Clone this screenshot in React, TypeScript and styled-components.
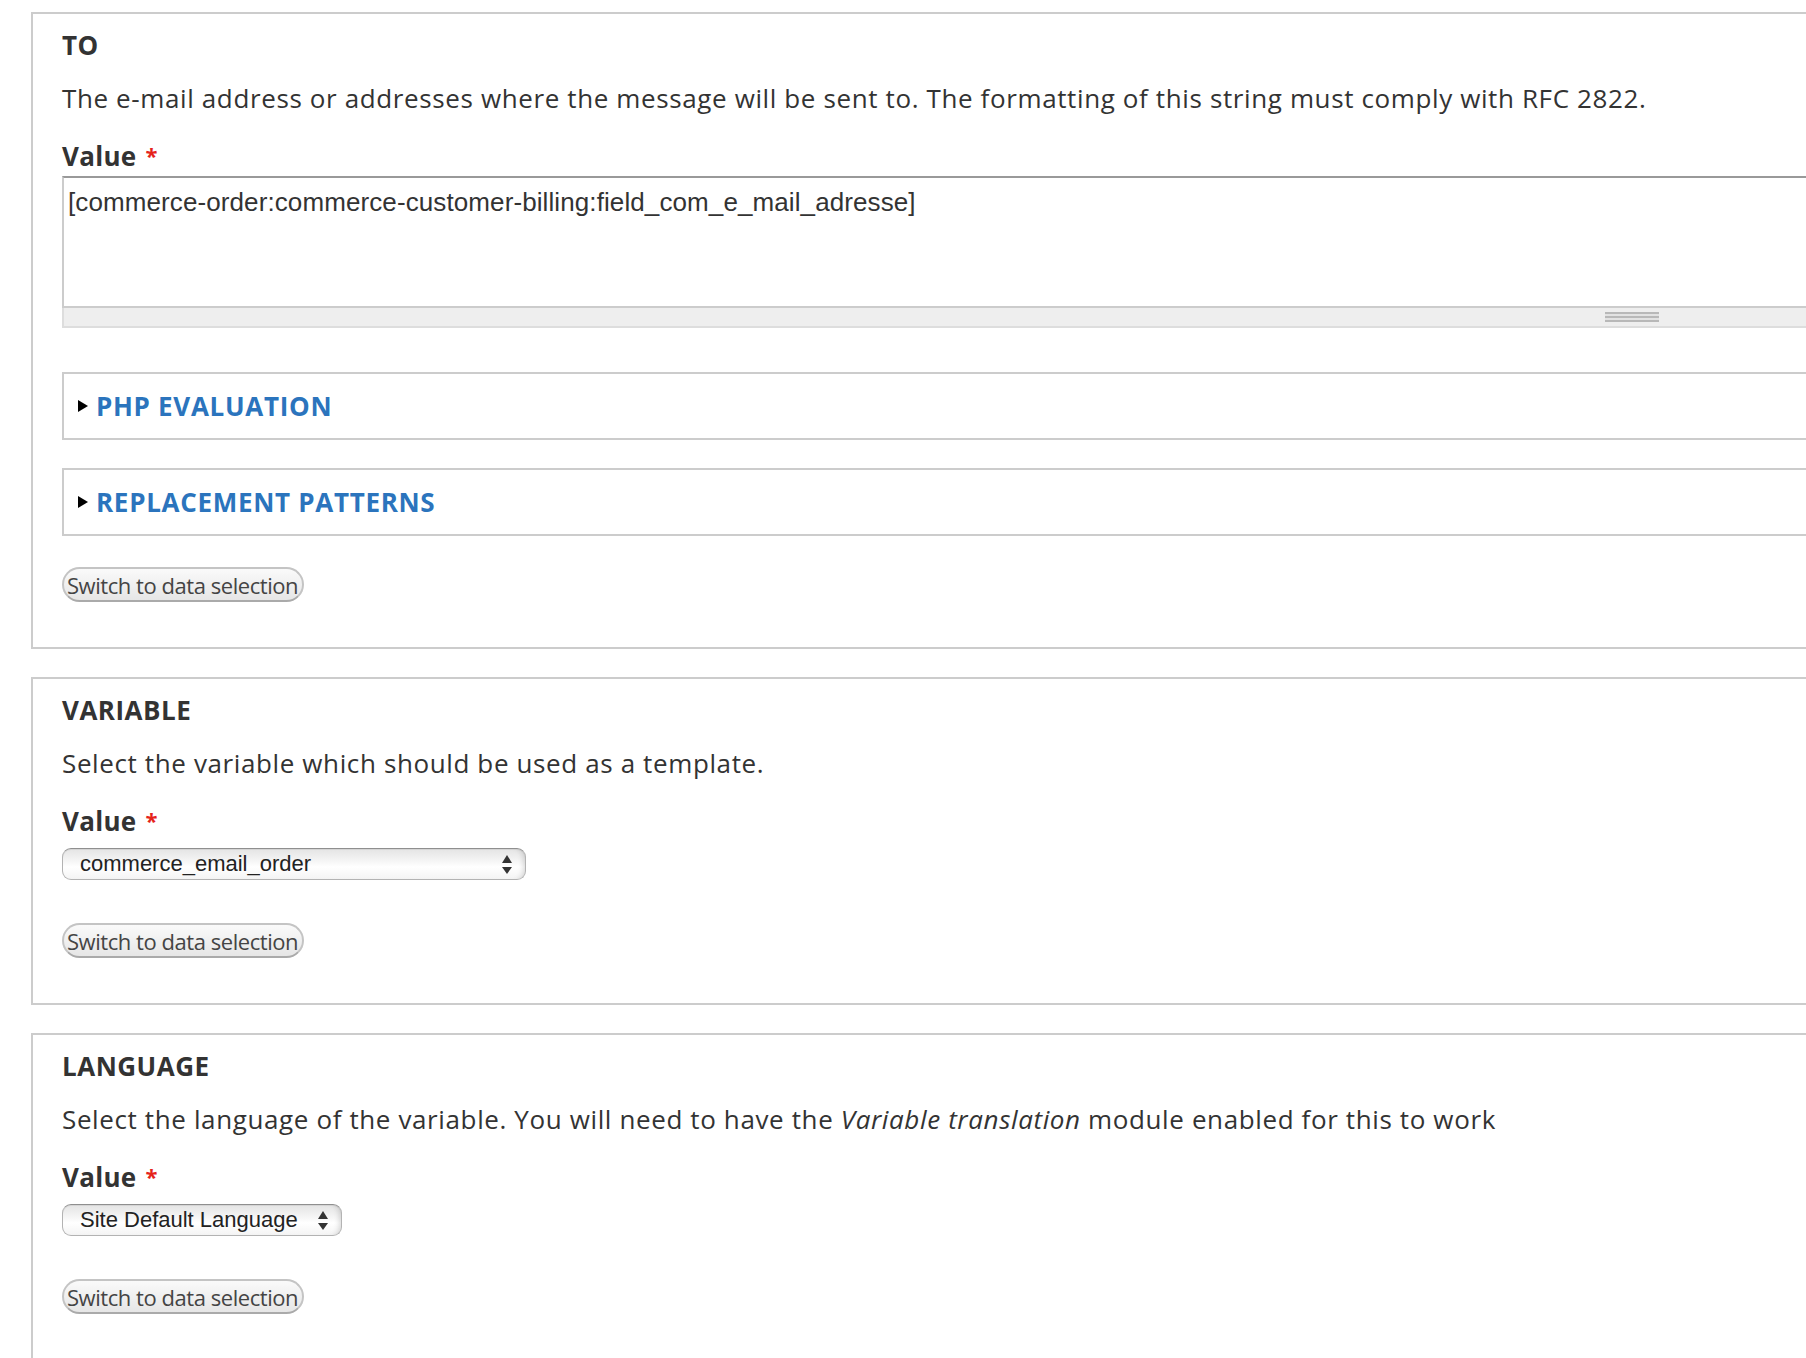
import styled, { createGlobalStyle } from 'styled-components'

const GlobalStyle = createGlobalStyle`
	html, body {
		margin: 0;
		padding: 0;
		background: #fff;
		overflow: hidden;
	}
	body {
		font-family: 'Open Sans', 'DejaVu Sans', sans-serif;
		font-size: 26px;
		color: #333;
	}
`

const Page = styled.main`
	padding: 12px 0 0 31px;
`

const Fieldset = styled.section`
	box-sizing: border-box;
	width: 3202px;
	margin-bottom: 28px;
	padding: 16px 29px 45px;
	border: 2px solid #ccc;
`

const Legend = styled.h2`
	margin: 0;
	font-size: 26px;
	line-height: 30px;
	font-weight: 700;
	letter-spacing: 0.5px;
	text-transform: uppercase;
	color: #333;
`

const Description = styled.p`
	margin: 23px 0 0;
	font-size: 26px;
	line-height: 30px;
	letter-spacing: 0.62px;
	color: #333;
`

const Label = styled.label`
	display: block;
	height: 30px;
	margin-top: 28px;
	font-size: 26px;
	line-height: 30px;
	font-weight: 700;
	letter-spacing: 0.3px;
	color: #333;
`

const Required = styled.span`
	margin-left: 9px;
	font-size: 22px;
	line-height: 0;
	vertical-align: 2px;
	color: #e5231b;
`

const TextArea = styled.textarea`
	display: block;
	box-sizing: border-box;
	width: 100%;
	height: 132px;
	margin: 5px 0 0;
	padding: 9px 4px 10px;
	border: 2px solid #ccc;
	border-top-color: #999;
	font-family: 'Liberation Sans', Arial, sans-serif;
	font-size: 26px;
	letter-spacing: 0.1px;
	color: #333;
	resize: none;
	outline: none;
`

const Grippie = styled.div`
	box-sizing: border-box;
	display: flex;
	justify-content: center;
	align-items: center;
	height: 20px;
	background: #eee;
	border: 2px solid #ddd;
	border-top: none;
`

const GrippieHandle = styled.span`
	width: 54px;
	height: 10px;
	background: repeating-linear-gradient(
		to bottom,
		#b8b8b8 0,
		#b8b8b8 2px,
		#e2e2e2 2px,
		#e2e2e2 4px
	);
`

const Collapsible = styled.div<{ first?: boolean }>`
	box-sizing: border-box;
	display: flex;
	align-items: center;
	gap: 8px;
	height: 68px;
	margin-top: ${(p) => (p.first ? '44px' : '28px')};
	padding: 0 14px;
	border: 2px solid #ccc;
`

const CollapsibleLink = styled.a`
	font-size: 26px;
	line-height: 30px;
	font-weight: 700;
	letter-spacing: 0.7px;
	text-transform: uppercase;
	color: #2b74bd;
	text-decoration: none;
`

const Button = styled.button<{ gap: number }>`
	box-sizing: border-box;
	display: block;
	height: 35px;
	margin-top: ${(p) => p.gap}px;
	padding: 0 4px 0 3px;
	border: 2px solid #c4c4c4;
	border-bottom-color: #aaa;
	border-radius: 18px;
	background: linear-gradient(to bottom, #fafafa 0%, #f0f0f0 50%, #e6e6e6 100%);
	font-family: 'Open Sans', 'DejaVu Sans', sans-serif;
	font-size: 22px;
	letter-spacing: -0.45px;
	color: #444;
`

const SelectBox = styled.div<{ width: number }>`
	box-sizing: border-box;
	display: flex;
	align-items: center;
	justify-content: space-between;
	width: ${(p) => p.width}px;
	height: 32px;
	margin-top: 12px;
	padding: 0 13px 0 17px;
	border: 1px solid #b3b3b3;
	border-top-color: #8f8f8f;
	border-radius: 9px;
	background: linear-gradient(
		to bottom,
		#e4e4e4 0%,
		#f3f3f3 35%,
		#ffffff 60%,
		#f4f4f4 100%
	);
	box-shadow: inset -6px 0 6px -5px rgba(0, 0, 0, 0.18),
		inset 0 1px 0 #d6d6d6;
	font-family: 'Liberation Sans', Arial, sans-serif;
	font-size: 22px;
	color: #222;
`

const Triangle = () => (
	<svg width='10' height='12' viewBox='0 0 10 12'>
		<polygon points='0,0 10,6 0,12' fill='#000' />
	</svg>
)

const Arrows = () => (
	<svg width='10' height='19' viewBox='0 0 10 19'>
		<polygon points='5,0 10,8 0,8' fill='#333' />
		<polygon points='0,12 10,12 5,19' fill='#333' />
	</svg>
)

export default function App() {
	return (
		<>
			<GlobalStyle />
			<Page>
				<Fieldset>
					<Legend>To</Legend>
					<Description>
						The e-mail address or addresses where the message will be sent to. The
						formatting of this string must comply with RFC 2822.
					</Description>
					<Label>
						Value<Required>*</Required>
					</Label>
					<TextArea
						defaultValue='[commerce-order:commerce-customer-billing:field_com_e_mail_adresse]'
						spellCheck={false}
					/>
					<Grippie>
						<GrippieHandle />
					</Grippie>
					<Collapsible first>
						<Triangle />
						<CollapsibleLink href='#'>PHP Evaluation</CollapsibleLink>
					</Collapsible>
					<Collapsible>
						<Triangle />
						<CollapsibleLink href='#'>Replacement patterns</CollapsibleLink>
					</Collapsible>
					<Button gap={31}>Switch to data selection</Button>
				</Fieldset>

				<Fieldset>
					<Legend>Variable</Legend>
					<Description>Select the variable which should be used as a template.</Description>
					<Label>
						Value<Required>*</Required>
					</Label>
					<SelectBox width={464}>
						<span>commerce_email_order</span>
						<Arrows />
					</SelectBox>
					<Button gap={43}>Switch to data selection</Button>
				</Fieldset>

				<Fieldset>
					<Legend>Language</Legend>
					<Description>
						Select the language of the variable. You will need to have the{' '}
						<em>Variable translation</em> module enabled for this to work
					</Description>
					<Label>
						Value<Required>*</Required>
					</Label>
					<SelectBox width={280}>
						<span>Site Default Language</span>
						<Arrows />
					</SelectBox>
					<Button gap={43}>Switch to data selection</Button>
				</Fieldset>
			</Page>
		</>
	)
}
